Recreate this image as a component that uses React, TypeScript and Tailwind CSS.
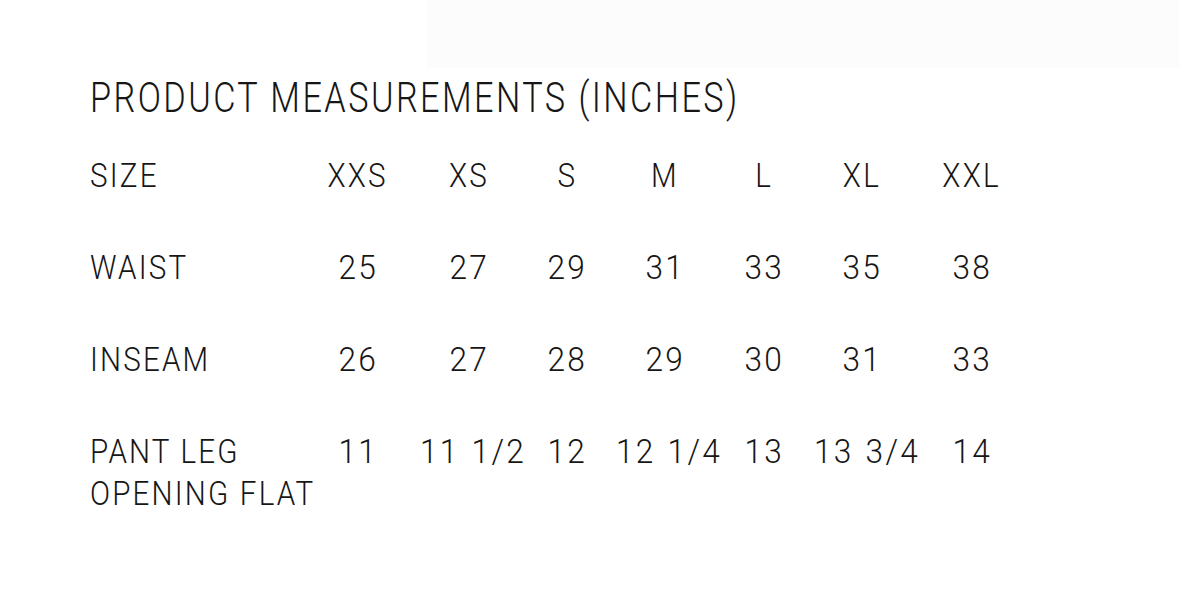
const sizes = ['XXS', 'XS', 'S', 'M', 'L', 'XL', 'XXL'];

const rows = [
  { label: ['WAIST'], values: ['25', '27', '29', '31', '33', '35', '38'] },
  { label: ['INSEAM'], values: ['26', '27', '28', '29', '30', '31', '33'] },
  {
    label: ['PANT LEG', 'OPENING FLAT'],
    values: ['11', '11 1/2', '12', '12 1/4', '13', '13 3/4', '14'],
  },
];

const cols = 'grid grid-cols-[210px_116px_106px_90px_106px_92px_104px_116px]';

// condensed look: Roboto squeezed horizontally
const cond = 'inline-block whitespace-nowrap scale-x-[0.87]';

export default function App() {
  return (
    <div
      className="w-[1179px] h-[600px] bg-white text-[#161616] overflow-hidden font-light"
      style={{ fontFamily: 'Roboto, "Liberation Sans", sans-serif' }}
    >
      <div className="h-[68px] pl-[426px]">
        <div className="h-full bg-[#fcfcfc]" />
      </div>

      <div className="pl-[90px]">
        <h2 className="text-[42px] leading-[60px] tracking-[3px] font-light">
          <span className="inline-block whitespace-nowrap origin-left scale-x-[0.815]">
            PRODUCT MEASUREMENTS (INCHES)
          </span>
        </h2>

        <div className={`${cols} mt-[26px] text-[34px] leading-[42px] tracking-[2.5px]`}>
          <div>
            <span className={`${cond} origin-left`}>SIZE</span>
          </div>
          {sizes.map((s) => (
            <div key={s} className="text-center">
              <span className={cond}>{s}</span>
            </div>
          ))}
        </div>

        {rows.map((r) => (
          <div key={r.label[0]} className={`${cols} mt-[50px] text-[34px] leading-[42px] tracking-[2.5px]`}>
            <div>
              {r.label.map((l) => (
                <div key={l} className="whitespace-nowrap">
                  <span className={`${cond} origin-left`}>{l}</span>
                </div>
              ))}
            </div>
            {r.values.map((v, i) => (
              <div key={i} className="text-center">
                <span className="inline-block whitespace-nowrap scale-x-[0.93] [word-spacing:2px]">
                  {v}
                </span>
              </div>
            ))}
          </div>
        ))}
      </div>
    </div>
  );
}
